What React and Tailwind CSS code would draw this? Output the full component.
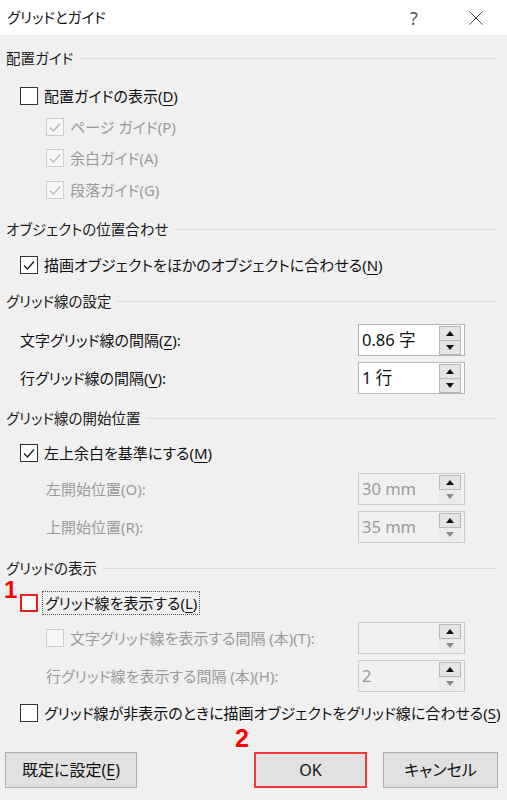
import React from 'react'

function Check({ color }) {
  return (
    <svg width="14" height="14" viewBox="0 0 14 14" fill="none" stroke={color} strokeWidth="1.4">
      <path d="M2 7.5 L5.5 11 L12 3.5" />
    </svg>
  )
}

function Box({ checked, disabled, red }) {
  var cls = 'w-[18px] h-[18px] shrink-0 flex items-center justify-center border bg-white border-[#333333]'
  if (disabled) cls = 'w-[18px] h-[18px] shrink-0 flex items-center justify-center border bg-[#f7f7f7] border-[#cccccc]'
  if (red) cls = 'w-[18px] h-[18px] shrink-0 flex items-center justify-center border-2 bg-white border-[#f01c1c]'
  return <div className={cls}>{checked && <Check color={disabled ? '#b8b8b8' : '#222222'} />}</div>
}

function Header({ label, className }) {
  return (
    <div className={'flex items-center h-[20px] pl-[6px] pr-[10px] ' + className}>
      <span className="text-[14.5px] text-[#1a1a1a] mr-[6px] leading-none">{label}</span>
      <div className="flex-1 h-px bg-[#dadada]"></div>
    </div>
  )
}

function Tri({ up, color }) {
  return (
    <svg width="8" height="5" viewBox="0 0 8 5" fill={color}>
      <path d={up ? 'M0 5 L4 0 L8 5 Z' : 'M0 0 L4 5 L8 0 Z'} />
    </svg>
  )
}

function Spin({ value, disabled }) {
  return (
    <div className={'w-[107px] h-[32px] flex items-center border ' + (disabled ? 'border-[#cccccc] bg-[#f0f0f0]' : 'border-[#b4b4b4] bg-white')}>
      <span className={'flex-1 pl-[3px] text-[16.5px] leading-none ' + (disabled ? 'text-[#9a9a9a]' : 'text-[#111111]')}>{value}</span>
      <div className="flex flex-col mr-[3px]">
        <div className="w-[22px] h-[15px] flex items-center justify-center bg-[#e5e5e5] border border-[#b9b9b9]">
          <Tri up color="#111111" />
        </div>
        {disabled ? (
          <div className="w-[22px] h-[14px] flex items-center justify-center bg-[#ebebeb]">
            <Tri color="#8a8a8a" />
          </div>
        ) : (
          <div className="w-[22px] h-[14px] flex items-center justify-center bg-[#e5e5e5] border border-t-0 border-[#b9b9b9]">
            <Tri color="#111111" />
          </div>
        )}
      </div>
    </div>
  )
}

function U({ children }) {
  return <span className="underline underline-offset-[3px] decoration-1">{children}</span>
}

export default function App() {
  return (
    <div className="relative w-[507px] h-[800px] bg-[#f0f0f0] overflow-hidden font-['Noto_Sans','Noto_Sans_CJK_JP',sans-serif] [font-feature-settings:'palt'] text-[#111111]">
      {/* title bar */}
      <div className="h-[35px] bg-white flex items-center pl-[7px]">
        <span className="text-[14.5px] leading-none text-[#111111] flex-1">グリッドとガイド</span>
        <span className="w-[20px] text-center text-[18px] leading-none text-[#555555] mr-[45px]">?</span>
        <svg width="14" height="14" viewBox="0 0 14 14" stroke="#444444" strokeWidth="1" className="mr-[24px]">
          <path d="M0.5 0.5 L13.5 13.5 M13.5 0.5 L0.5 13.5" />
        </svg>
      </div>

      <Header label="配置ガイド" className="mt-[13px]" />
      <div className="h-[30px] mt-[13px] pl-[20px] flex items-center gap-[6px]">
        <Box />
        <span className="text-[15px] leading-none">配置ガイドの表示(<U>D</U>)</span>
      </div>
      <div className="h-[30px] mt-[1px] pl-[46px] flex items-center gap-[6px]">
        <Box checked disabled />
        <span className="text-[15px] leading-none text-[#9a9a9a]">ページ ガイド(P)</span>
      </div>
      <div className="h-[30px] mt-[1px] pl-[46px] flex items-center gap-[6px]">
        <Box checked disabled />
        <span className="text-[15px] leading-none text-[#9a9a9a]">余白ガイド(A)</span>
      </div>
      <div className="h-[30px] mt-[2px] pl-[46px] flex items-center gap-[6px]">
        <Box checked disabled />
        <span className="text-[15px] leading-none text-[#9a9a9a]">段落ガイド(G)</span>
      </div>

      <Header label="オブジェクトの位置合わせ" className="mt-[14px]" />
      <div className="h-[30px] mt-[11px] pl-[20px] flex items-center gap-[6px]">
        <Box checked />
        <span className="text-[15px] leading-none">描画オブジェクトをほかのオブジェクトに合わせる(<U>N</U>)</span>
      </div>

      <Header label="グリッド線の設定" className="mt-[11px]" />
      <div className="h-[32px] mt-[13px] pl-[20px] flex items-center">
        <span className="flex-1 text-[15px] leading-none">文字グリッド線の間隔(<U>Z</U>):</span>
        <div className="mr-[42px]"><Spin value="0.86 字" /></div>
      </div>
      <div className="h-[32px] mt-[6px] pl-[20px] flex items-center">
        <span className="flex-1 text-[15px] leading-none">行グリッド線の間隔(<U>V</U>):</span>
        <div className="mr-[42px]"><Spin value="1 行" /></div>
      </div>

      <Header label="グリッド線の開始位置" className="mt-[14px]" />
      <div className="h-[30px] mt-[10px] pl-[20px] flex items-center gap-[6px]">
        <Box checked />
        <span className="text-[15px] leading-none">左上余白を基準にする(<U>M</U>)</span>
      </div>
      <div className="h-[32px] mt-[5px] pl-[46px] flex items-center">
        <span className="flex-1 text-[15px] leading-none text-[#9a9a9a]">左開始位置(O):</span>
        <div className="mr-[42px]"><Spin value="30 mm" disabled /></div>
      </div>
      <div className="h-[32px] mt-[6px] pl-[46px] flex items-center">
        <span className="flex-1 text-[15px] leading-none text-[#9a9a9a]">上開始位置(R):</span>
        <div className="mr-[42px]"><Spin value="35 mm" disabled /></div>
      </div>

      <Header label="グリッドの表示" className="mt-[15px]" />
      <div className="h-[30px] mt-[10px] pl-[20px] flex items-center gap-[4px]">
        <Box red />
        <span className="h-[24px] px-[2px] flex items-center border border-dotted border-[#555555] text-[15px] leading-none">グリッド線を表示する(<U>L</U>)</span>
      </div>
      <div className="h-[32px] mt-[4px] pl-[46px] flex items-center">
        <div className="flex-1 flex items-center gap-[6px]">
          <Box disabled />
          <span className="text-[15px] leading-none text-[#9a9a9a]">文字グリッド線を表示する間隔 (本)(T):</span>
        </div>
        <div className="mr-[42px]"><Spin value="" disabled /></div>
      </div>
      <div className="h-[32px] mt-[6px] pl-[46px] flex items-center">
        <span className="flex-1 text-[15px] leading-none text-[#9a9a9a]">行グリッド線を表示する間隔 (本)(H):</span>
        <div className="mr-[42px]"><Spin value="2" disabled /></div>
      </div>
      <div className="h-[30px] mt-[6px] pl-[20px] flex items-center gap-[6px]">
        <Box />
        <span className="text-[15px] leading-none whitespace-nowrap">グリッド線が非表示のときに描画オブジェクトをグリッド線に合わせる(<U>S</U>)</span>
      </div>

      {/* buttons */}
      <div className="mt-[24px] px-[5px] flex items-center">
        <button className="w-[132px] h-[36px] bg-[#e1e1e1] border border-[#adadad] text-[16px] leading-none">既定に設定(<U>E</U>)</button>
        <div className="flex-1"></div>
        <button className="w-[113px] h-[36px] bg-[#e1e1e1] border-2 border-[#f23a3a] text-[16px] leading-none">OK</button>
        <button className="w-[115px] h-[36px] ml-[16px] mr-[4px] bg-[#e1e1e1] border border-[#adadad] text-[16px] leading-none">キャンセル</button>
      </div>

      {/* step markers */}
      <span className="absolute left-[4px] top-[578px] text-[24px] font-bold leading-none text-[#ff0000] [text-shadow:0_0_2px_#ffffff] font-['Liberation_Sans',sans-serif]">1</span>
      <span className="absolute left-[235px] top-[726px] text-[25px] font-bold leading-none text-[#ff0000] [text-shadow:0_0_2px_#ffffff] font-['Liberation_Sans',sans-serif]">2</span>
    </div>
  )
}
